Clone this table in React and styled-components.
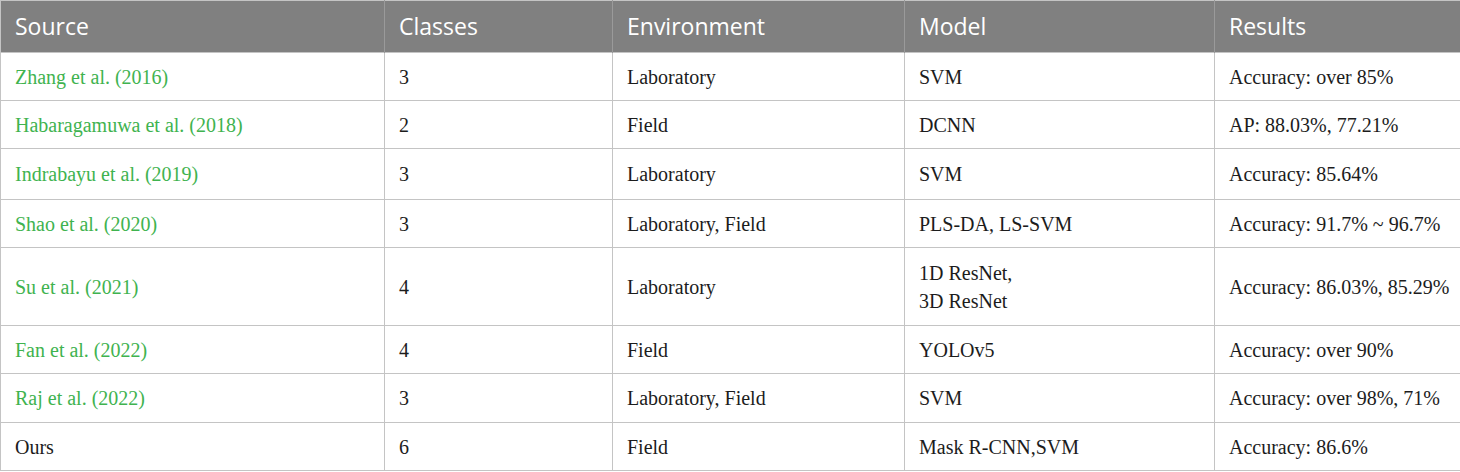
import React from 'react';
import styled, { createGlobalStyle } from 'styled-components';

const GlobalStyle = createGlobalStyle`
  html, body {
    margin: 0;
    padding: 0;
    background: #fff;
  }
`;

const Table = styled.table`
  width: 1460px;
  table-layout: fixed;
  border-collapse: collapse;
  border: 1px solid #c4c4c4;
`;

const HeadCell = styled.th`
  height: 49px;
  padding: 0 0 2px 14px;
  background-color: #808080;
  color: #fff;
  font-family: "Open Sans", "Liberation Sans", sans-serif;
  font-size: 23px;
  font-weight: 400;
  text-align: left;
  vertical-align: middle;
  white-space: nowrap;
  border-left: 1px solid #9a9a9a;
  border-right: 1px solid #9a9a9a;

  &:first-child {
    border-left: 1px solid #c4c4c4;
  }
`;

const Row = styled.tr`
  height: ${(p) => p.$h || 48}px;
`;

const Cell = styled.td`
  padding: 0 6px 0 14px;
  border: 1px solid #c4c4c4;
  font-family: "Liberation Serif", "DejaVu Serif", serif;
  font-size: 20px;
  line-height: 28px;
  white-space: nowrap;
  color: ${(p) => (p.$link ? '#3fb34f' : '#1c1c1c')};
  vertical-align: middle;
`;

const columns = [
  { name: 'Source', width: 384 },
  { name: 'Classes', width: 228 },
  { name: 'Environment', width: 292 },
  { name: 'Model', width: 310 },
  { name: 'Results', width: 246 },
];

const rows = [
  { source: 'Zhang et al. (2016)', link: true, classes: '3', env: 'Laboratory', model: ['SVM'], result: 'Accuracy: over 85%', h: 48 },
  { source: 'Habaragamuwa et al. (2018)', link: true, classes: '2', env: 'Field', model: ['DCNN'], result: 'AP: 88.03%, 77.21%', h: 48 },
  { source: 'Indrabayu et al. (2019)', link: true, classes: '3', env: 'Laboratory', model: ['SVM'], result: 'Accuracy: 85.64%', h: 51 },
  { source: 'Shao et al. (2020)', link: true, classes: '3', env: 'Laboratory, Field', model: ['PLS-DA, LS-SVM'], result: 'Accuracy: 91.7% ~ 96.7%', h: 48 },
  { source: 'Su et al. (2021)', link: true, classes: '4', env: 'Laboratory', model: ['1D ResNet,', '3D ResNet'], result: 'Accuracy: 86.03%, 85.29%', h: 78 },
  { source: 'Fan et al. (2022)', link: true, classes: '4', env: 'Field', model: ['YOLOv5'], result: 'Accuracy: over 90%', h: 48 },
  { source: 'Raj et al. (2022)', link: true, classes: '3', env: 'Laboratory, Field', model: ['SVM'], result: 'Accuracy: over 98%, 71%', h: 49 },
  { source: 'Ours', link: false, classes: '6', env: 'Field', model: ['Mask R-CNN,SVM'], result: 'Accuracy: 86.6%', h: 48 },
];

export default function App() {
  return (
    <>
      <GlobalStyle />
      <Table>
        <colgroup>
          {columns.map((c) => (
            <col key={c.name} style={{ width: c.width }} />
          ))}
        </colgroup>
        <thead>
          <tr>
            {columns.map((c) => (
              <HeadCell key={c.name}>{c.name}</HeadCell>
            ))}
          </tr>
        </thead>
        <tbody>
          {rows.map((r) => (
            <Row key={r.source} $h={r.h}>
              <Cell $link={r.link}>{r.source}</Cell>
              <Cell>{r.classes}</Cell>
              <Cell>{r.env}</Cell>
              <Cell>
                {r.model.map((m, i) => (
                  <div key={i}>{m}</div>
                ))}
              </Cell>
              <Cell>{r.result}</Cell>
            </Row>
          ))}
        </tbody>
      </Table>
    </>
  );
}
